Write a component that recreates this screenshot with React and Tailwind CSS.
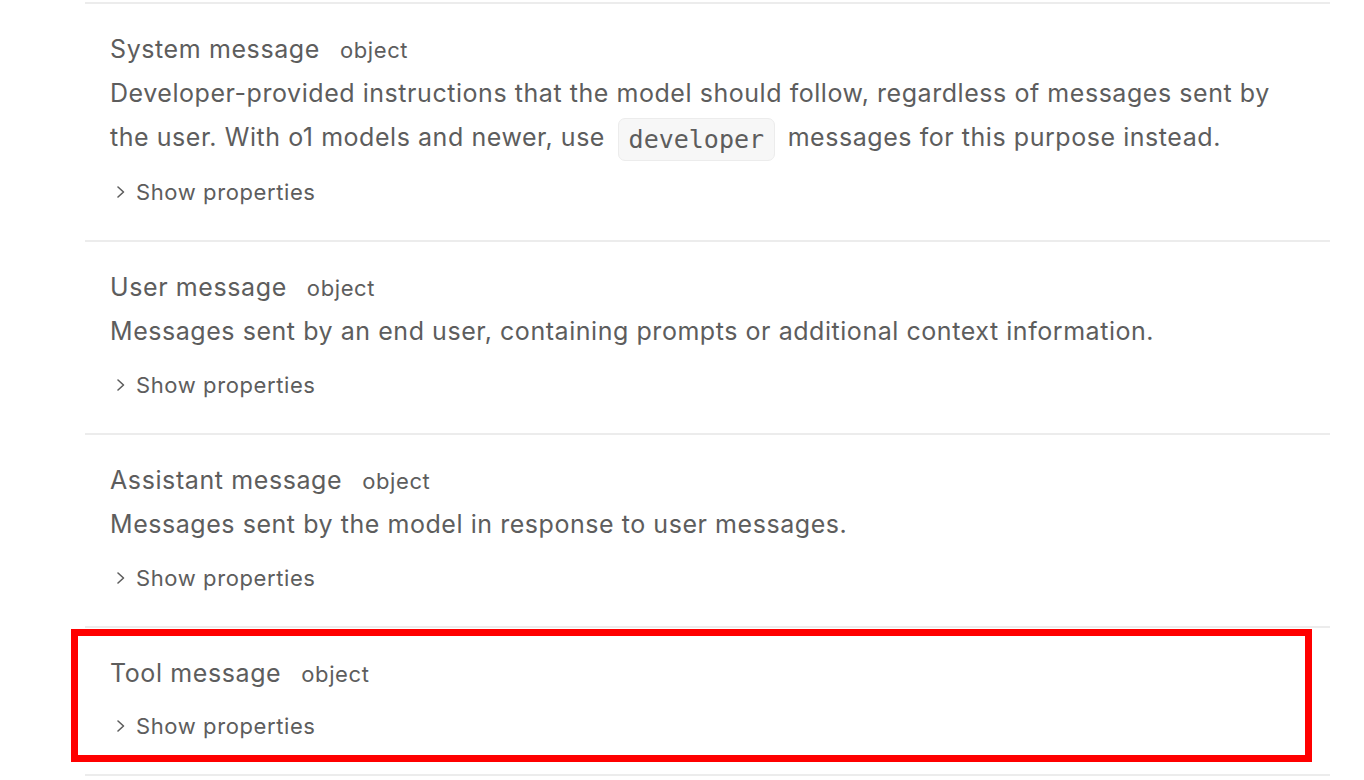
import React from "react";

const Chevron = () => (
  <svg width="12" height="14" viewBox="0 0 12 14" fill="none" className="shrink-0">
    <path d="M3 2 L8.5 7 L3 12" stroke="#5d5d5d" strokeWidth="1.6" strokeLinecap="round" strokeLinejoin="round" />
  </svg>
);

const ShowProps = ({ className = "" }) => (
  <div className={"flex items-center gap-[9px] pl-[5px] h-[32px] text-[22px] leading-[32px] tracking-[0.6px] text-[#5d5d5d] " + className}>
    <Chevron />
    <span>Show properties</span>
  </div>
);

const Title = ({ name }) => (
  <div className="flex items-baseline gap-[20px] h-[32px] leading-[32px] tracking-[0.6px]">
    <span className="text-[25px] text-[#5d5d5d]">{name}</span>
    <span className="text-[22px] text-[#5d5d5d]">object</span>
  </div>
);

export default function App() {
  return (
    <div
      className="w-[1364px] h-[780px] overflow-hidden bg-white pt-[2px]"
      style={{ fontFamily: "Inter, 'Noto Sans', sans-serif" }}
    >
      <div className="ml-[85px] w-[1245px]">
        <section className="border-t-2 border-[#ececec] px-[25px] pt-[29px] pb-[32px]">
          <Title name="System message" />
          <p className="mt-[6px] text-[25px] leading-[44px] tracking-[0.55px] text-[#5d5d5d]">
            Developer-provided instructions that the model should follow, regardless of messages sent by the user. With o1 models and newer, use{" "}
            <code
              className="inline-block mx-[5px] my-[-4px] px-[10px] h-[43px] leading-[41px] align-middle rounded-[7px] border border-[#ececec] bg-[#f7f7f7] text-[25px] tracking-normal text-[#5d5d5d]"
              style={{ fontFamily: "'DejaVu Sans Mono', monospace" }}
            >
              developer
            </code>{" "}
            messages for this purpose instead.
          </p>
          <ShowProps className="mt-[17px]" />
        </section>

        <section className="border-t-2 border-[#ececec] px-[25px] pt-[29px] pb-[32px]">
          <Title name="User message" />
          <p className="mt-[6px] text-[25px] leading-[44px] tracking-[0.55px] text-[#5d5d5d]">
            Messages sent by an end user, containing prompts or additional context information.
          </p>
          <ShowProps className="mt-[16px]" />
        </section>

        <section className="border-t-2 border-[#ececec] px-[25px] pt-[29px] pb-[32px]">
          <Title name="Assistant message" />
          <p className="mt-[6px] text-[25px] leading-[44px] tracking-[0.55px] text-[#5d5d5d]">
            Messages sent by the model in response to user messages.
          </p>
          <ShowProps className="mt-[16px]" />
        </section>

        <section className="relative border-t-2 border-[#ececec] px-[25px] pt-[29px] pb-[32px]">
          <div className="absolute left-[-14px] right-[18px] top-[1px] bottom-[12px] border-[7px] border-[#ff0000] pointer-events-none" />
          <Title name="Tool message" />
          <ShowProps className="mt-[21px]" />
        </section>
        <div className="border-t-2 border-[#ececec]" />
      </div>
    </div>
  );
}
